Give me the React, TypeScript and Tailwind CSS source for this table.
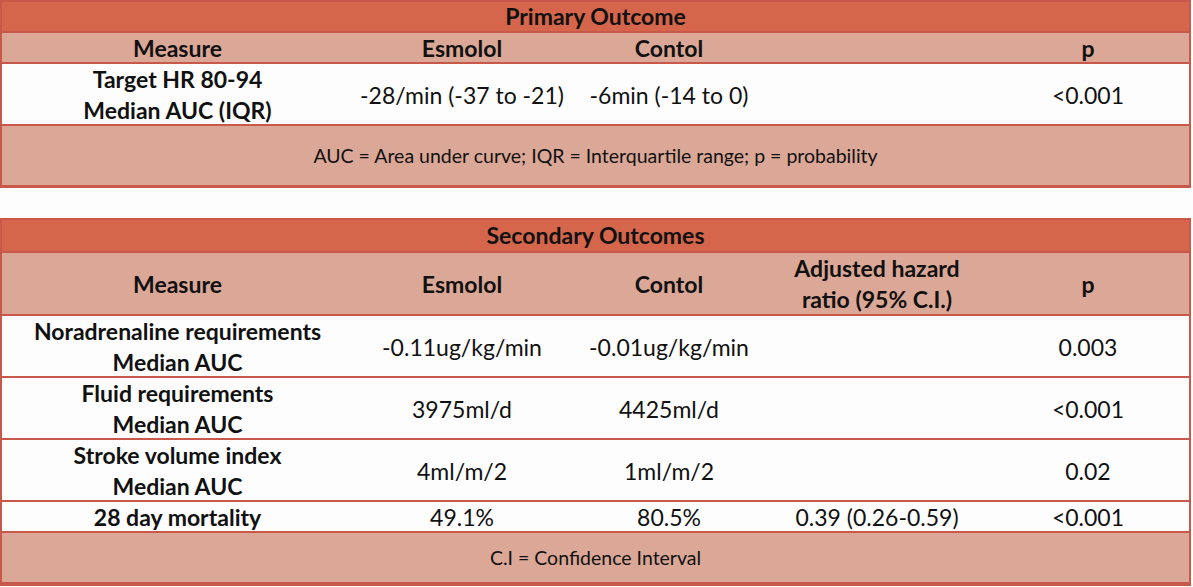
const border = "border-[#c85849]";

const cols = "grid grid-cols-[351px_218px_196px_220px_1fr]";

function Row({
  cells,
  bg,
  h,
  bold,
}: {
  cells: (string[] | null)[];
  bg: string;
  h: string;
  bold?: boolean[];
}) {
  return (
    <div className={`${cols} ${bg} ${h} border-b-2 ${border}`}>
      {cells.map((c, i) => (
        <div
          key={i}
          className={`flex flex-col items-center justify-center text-center leading-[31px] text-[23px] whitespace-nowrap ${
            bold?.[i] ? "font-bold" : ""
          }`}
        >
          {c?.map((l) => (
            <span key={l}>{l}</span>
          ))}
        </div>
      ))}
    </div>
  );
}

function Title({ text, h }: { text: string; h: string }) {
  return (
    <div
      className={`${h} bg-[#d5654b] border-b-2 ${border} flex items-center justify-center text-[23px] font-bold`}
    >
      {text}
    </div>
  );
}

function Footer({ text, h }: { text: string; h: string }) {
  return (
    <div className={`${h} bg-[#dba796] flex items-center justify-center text-[19.5px]`}>
      {text}
    </div>
  );
}

export default function App() {
  const hdrBold = [true, true, true, true, true];
  const firstBold = [true, false, false, false, false];
  return (
    <div
      className="w-[1193px] h-[587px] bg-[#fdfdfd] text-[#111] overflow-hidden"
      style={{ fontFamily: "Lato, 'Open Sans', sans-serif" }}
    >
      <div className={`w-[1191px] border-2 border-b-[3px] ${border}`}>
        <Title h="h-[31px]" text="Primary Outcome" />
        <Row
          bg="bg-[#dba796]"
          h="h-[31px]"
          bold={hdrBold}
          cells={[["Measure"], ["Esmolol"], ["Contol"], null, ["p"]]}
        />
        <Row
          bg="bg-[#fdfdfd]"
          h="h-[62px]"
          bold={firstBold}
          cells={[
            ["Target HR 80-94", "Median AUC (IQR)"],
            ["-28/min (-37 to -21)"],
            ["-6min (-14 to 0)"],
            null,
            ["<0.001"],
          ]}
        />
        <Footer
          h="h-[59px]"
          text="AUC = Area under curve; IQR = Interquartile range; p = probability"
        />
      </div>

      <div className="h-[30px]" />

      <div className={`w-[1191px] border-2 border-b-[4px] ${border}`}>
        <Title h="h-[33px]" text="Secondary Outcomes" />
        <Row
          bg="bg-[#dba796]"
          h="h-[63px]"
          bold={hdrBold}
          cells={[
            ["Measure"],
            ["Esmolol"],
            ["Contol"],
            ["Adjusted hazard", "ratio (95% C.I.)"],
            ["p"],
          ]}
        />
        <Row
          bg="bg-[#fdfdfd]"
          h="h-[62px]"
          bold={firstBold}
          cells={[
            ["Noradrenaline requirements", "Median AUC"],
            ["-0.11ug/kg/min"],
            ["-0.01ug/kg/min"],
            null,
            ["0.003"],
          ]}
        />
        <Row
          bg="bg-[#fdfdfd]"
          h="h-[62px]"
          bold={firstBold}
          cells={[
            ["Fluid requirements", "Median AUC"],
            ["3975ml/d"],
            ["4425ml/d"],
            null,
            ["<0.001"],
          ]}
        />
        <Row
          bg="bg-[#fdfdfd]"
          h="h-[62px]"
          bold={firstBold}
          cells={[
            ["Stroke volume index", "Median AUC"],
            ["4ml/m/2"],
            ["1ml/m/2"],
            null,
            ["0.02"],
          ]}
        />
        <Row
          bg="bg-[#fdfdfd]"
          h="h-[31px]"
          bold={firstBold}
          cells={[
            ["28 day mortality"],
            ["49.1%"],
            ["80.5%"],
            ["0.39 (0.26-0.59)"],
            ["<0.001"],
          ]}
        />
        <Footer h="h-[49px]" text="C.I = Confidence Interval" />
      </div>
    </div>
  );
}
